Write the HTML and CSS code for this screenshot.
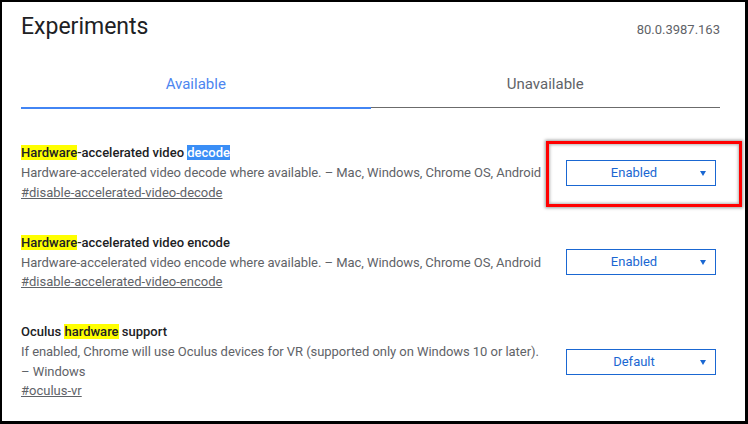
FILE: index.html
```html
<!DOCTYPE html>
<html lang="en">
<head>
    <meta charset="UTF-8">
    <meta name="viewport" content="width=device-width, initial-scale=1.0">
    <title>Experiments</title>
    <link rel="stylesheet" href="styles.css">
</head>
<body>
    <div class="frame">
        <div class="header">
            <h1>Experiments</h1>
            <span class="version">80.0.3987.163</span>
        </div>

        <div class="tabs">
            <div class="tab active">Available</div>
            <div class="tab">Unavailable</div>
        </div>

        <div class="flag">
            <div class="flag-text">
                <div class="flag-name"><span class="match">Hardware</span>-accelerated video <span class="selected">decode</span></div>
                <div class="flag-desc">Hardware-accelerated video decode where available. – Mac, Windows, Chrome OS, Android</div>
                <a class="flag-link" href="#disable-accelerated-video-decode">#disable-accelerated-video-decode</a>
            </div>
            <div class="flag-control">
                <div class="select">Enabled<span class="arrow"></span></div>
                <div class="callout"></div>
            </div>
        </div>

        <div class="flag">
            <div class="flag-text">
                <div class="flag-name"><span class="match">Hardware</span>-accelerated video encode</div>
                <div class="flag-desc">Hardware-accelerated video encode where available. – Mac, Windows, Chrome OS, Android</div>
                <a class="flag-link" href="#disable-accelerated-video-encode">#disable-accelerated-video-encode</a>
            </div>
            <div class="flag-control">
                <div class="select">Enabled<span class="arrow"></span></div>
            </div>
        </div>

        <div class="flag">
            <div class="flag-text">
                <div class="flag-name">Oculus <span class="match">hardware</span> support</div>
                <div class="flag-desc">If enabled, Chrome will use Oculus devices for VR (supported only on Windows 10 or later). <span class="nowrap">– Windows</span></div>
                <a class="flag-link" href="#oculus-vr">#oculus-vr</a>
            </div>
            <div class="flag-control">
                <div class="select">Default<span class="arrow"></span></div>
            </div>
        </div>
    </div>
</body>
</html>
```

FILE: styles.css
```css
body {
    margin: 0;
    font-family: Roboto, "Liberation Sans", sans-serif;
    background-color: #000;
}

.frame {
    box-sizing: border-box;
    height: 100vh;
    background-color: #fff;
    border-style: solid;
    border-color: #000;
    border-width: 2px 3px 3px 2px;
    padding: 9px 25px 0 19px;
    overflow: hidden;
}

.header {
    display: flex;
    justify-content: space-between;
    align-items: baseline;
}

h1 {
    margin: 0;
    font-size: 23px;
    font-weight: 400;
    line-height: 32px;
    color: #202124;
}

.version {
    font-size: 13px;
    color: #5f6368;
}

.tabs {
    display: flex;
    margin-top: 31px;
}

.tab {
    flex: 1;
    text-align: center;
    font-size: 15px;
    line-height: 20px;
    padding-bottom: 13px;
    color: #5f6368;
    border-bottom: 1px solid #6b6b6b;
    margin-bottom: 1px;
}

.tab.active {
    color: #4d86f0;
    border-bottom: 2px solid #4285f4;
    margin-bottom: 0;
}

.flag {
    display: flex;
    align-items: center;
    gap: 10px;
    margin-top: 30px;
}

.tabs + .flag {
    margin-top: 34px;
}

.flag-text {
    flex: 1;
    font-size: 13px;
    line-height: 20px;
}

.flag-name {
    color: #202124;
    font-weight: 500;
}

.flag-desc {
    color: #5f6368;
    line-height: 19.5px;
    max-width: 530px;
    letter-spacing: -0.05px;
}

.nowrap {
    white-space: nowrap;
}

.flag-link {
    display: block;
    color: #5f6368;
    text-decoration: underline;
}

.match {
    background-color: #ffff00;
}

.selected {
    background-color: #3a8ef6;
    color: #fff;
}

.flag-control {
    position: relative;
    flex: 0 0 150px;
    margin-right: 4px;
}

.select {
    box-sizing: border-box;
    position: relative;
    height: 26px;
    border: 1px solid #1a67d2;
    color: #1a67d2;
    font-size: 13px;
    line-height: 24px;
    text-align: center;
    padding-right: 14px;
}

.arrow {
    position: absolute;
    right: 9px;
    top: 10px;
    border-left: 3px solid transparent;
    border-right: 3px solid transparent;
    border-top: 5px solid #1a67d2;
}

.callout {
    position: absolute;
    left: -20px;
    right: -26px;
    top: -19px;
    bottom: -21px;
    border: 3px solid #ff0000;
    box-shadow: 0 0 3px 1px rgba(0, 0, 0, 0.4), inset 0 0 3px 1px rgba(0, 0, 0, 0.3);
}
```
